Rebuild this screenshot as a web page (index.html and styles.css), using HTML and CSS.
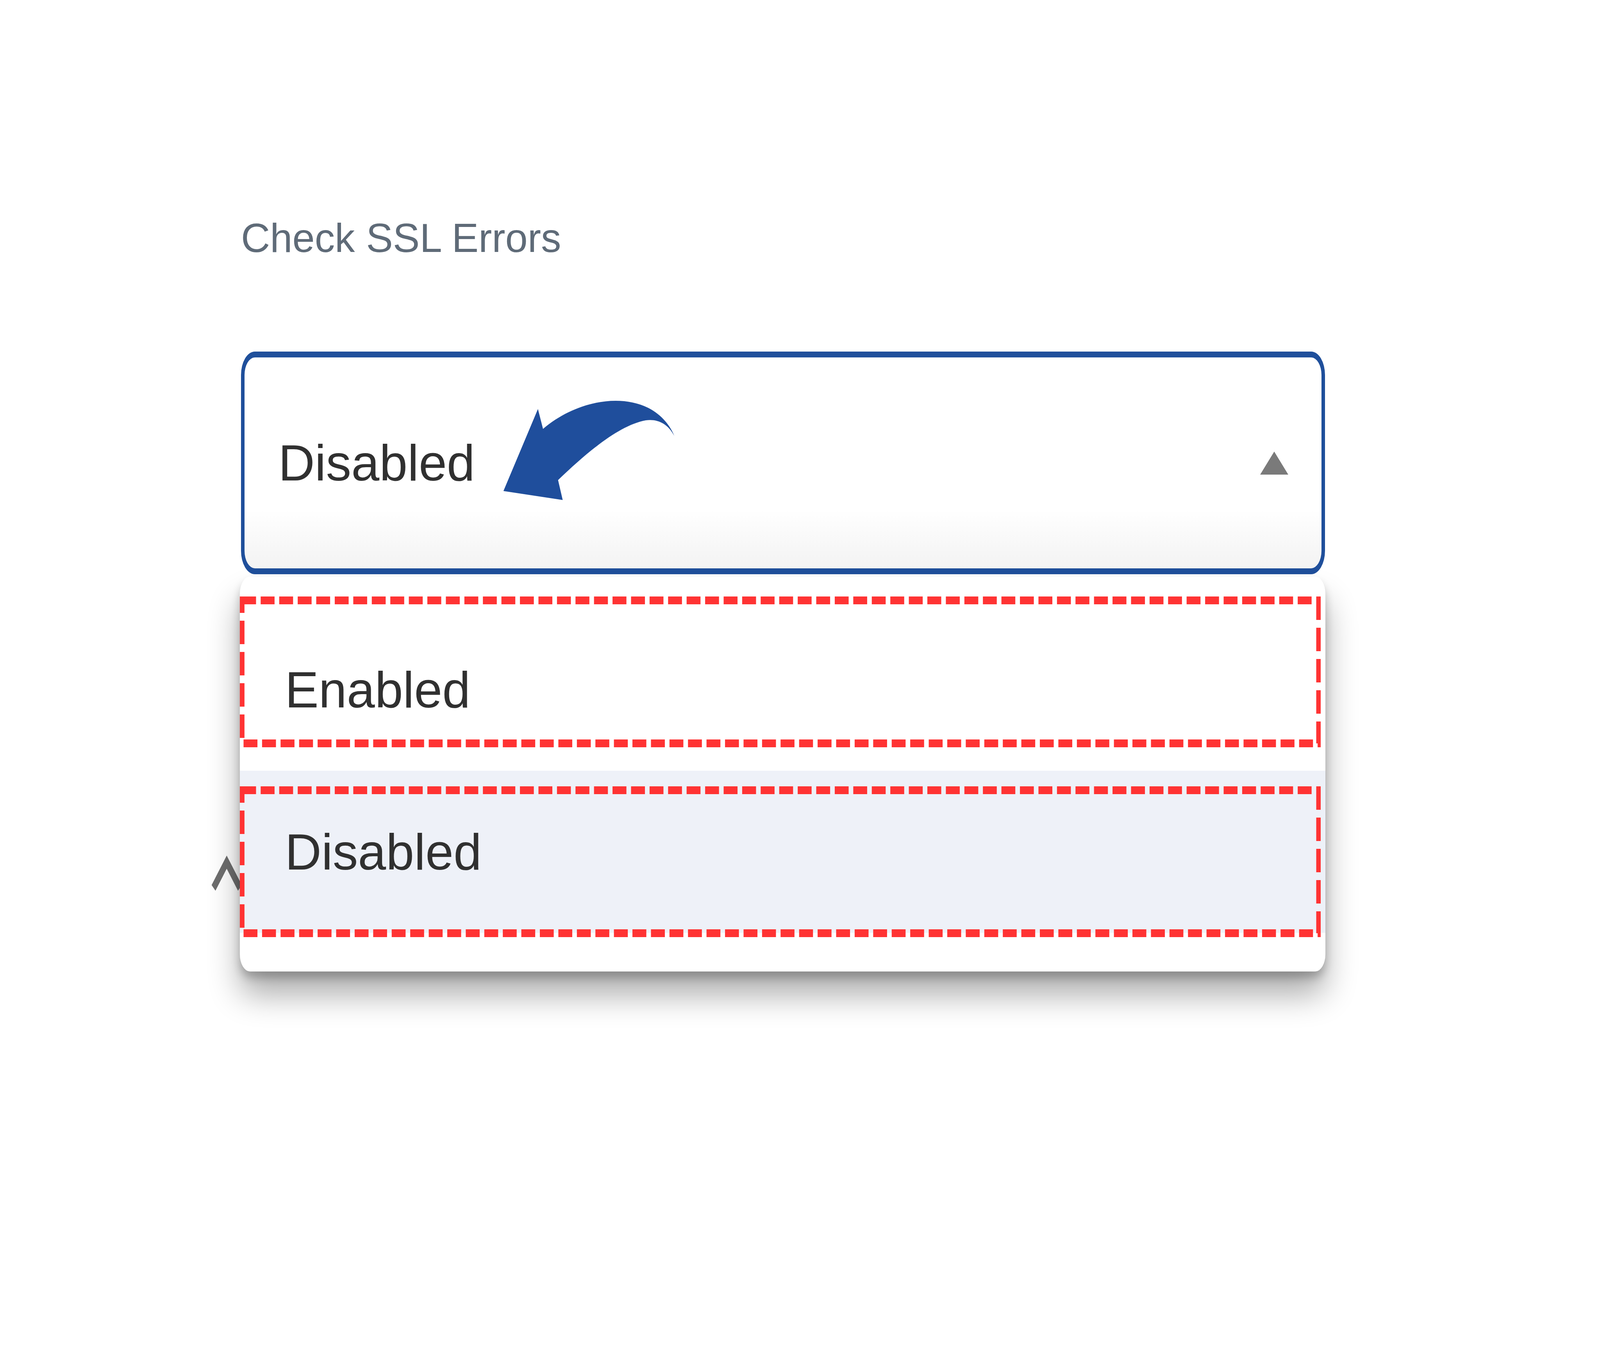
FILE: index.html
```html
<!DOCTYPE html>
<html lang="en">
<head>
  <meta charset="UTF-8">
  <meta name="viewport" content="width=device-width, initial-scale=1">
  <title>Check SSL Errors</title>
  <link rel="stylesheet" href="styles.css">
</head>
<body>

  <div class="field">
    <label class="field-label">Check SSL Errors</label>

    <div class="select-wrap">
      <div class="select-box">
        <span class="select-value">Disabled</span>
        <span class="caret"></span>

        <!-- annotation arrow -->
        <svg class="hint-arrow" viewBox="0 0 800 300" preserveAspectRatio="none">
          <path d="M25,257 L174,47 L196,98 C330,30 520,6 650,44 C710,62 748,92 763,116 C735,84 690,72 640,76 C530,88 400,150 261,229 L281,280 Z" fill="#1f4e9c"/>
        </svg>
      </div>

      <!-- collapse chevron sitting under the open menu -->
      <svg class="chevron" viewBox="0 0 160 120" preserveAspectRatio="none">
        <path d="M23,93 L80,27 L137,93" fill="none" stroke="#6e6e6e" stroke-width="22"/>
      </svg>

      <div class="menu">
        <div class="option">Enabled</div>
        <div class="option active">Disabled</div>

        <svg class="mark mark-1" viewBox="0 0 4670 386" preserveAspectRatio="none">
          <rect x="10" y="10" width="4650" height="366" fill="none" stroke="#ff3333" stroke-width="20" stroke-dasharray="60 20"/>
        </svg>
        <svg class="mark mark-2" viewBox="0 0 4670 386" preserveAspectRatio="none">
          <rect x="10" y="10" width="4650" height="366" fill="none" stroke="#ff3333" stroke-width="20" stroke-dasharray="60 20"/>
        </svg>
      </div>
    </div>
  </div>

</body>
</html>
```

FILE: styles.css
```css
  /* sizes are written in the units of the 6912 x 3456 design */
  :root {
    --x: calc(100vw / 6912);
    --y: calc(100vh / 3456);
    --f: calc(0.65 * var(--x) + 0.35 * var(--y));
  }

  body {
    margin: 0;
    background: #fff;
    font-family: 'Liberation Sans', Arial, sans-serif;
  }

  .field {
    margin-left: calc(1041 * var(--x));
    padding-top: calc(529 * var(--y));
    width: calc(4690 * var(--x));
    padding-bottom: calc(400 * var(--y));
  }

  .field-label {
    display: block;
    height: calc(161 * var(--y));
    font-size: calc(140 * var(--f));
    line-height: calc(161 * var(--y));
    color: #5f6b78;
  }

  .select-wrap {
    position: relative;
    margin-top: calc(210 * var(--y));
  }

  .select-box {
    position: relative;
    box-sizing: border-box;
    width: calc(4683 * var(--x));
    height: calc(570 * var(--y));
    border-style: solid;
    border-color: #1f4f9b;
    border-width: calc(15 * var(--y)) calc(16 * var(--x));
    border-radius: calc(60 * var(--x)) / calc(60 * var(--y));
    background: linear-gradient(#fff 72%, #f3f3f3);
    display: flex;
    align-items: center;
    justify-content: space-between;
    padding: 0 calc(143 * var(--x)) 0 calc(146 * var(--x));
  }

  .select-value {
    font-size: calc(176 * var(--f));
    color: #303030;
  }

  .caret {
    width: 0;
    height: 0;
    border-left: calc(61 * var(--x)) solid transparent;
    border-right: calc(61 * var(--x)) solid transparent;
    border-bottom: calc(59 * var(--y)) solid #7a7a7a;
  }

  .hint-arrow {
    position: absolute;
    left: calc(1093 * var(--x));
    top: calc(85 * var(--y));
    width: calc(800 * var(--x));
    height: calc(300 * var(--y));
  }

  .chevron {
    position: absolute;
    left: calc(-141 * var(--x));
    top: calc(1280 * var(--y));
    width: calc(160 * var(--x));
    height: calc(120 * var(--y));
  }

  .menu {
    position: relative;
    box-sizing: border-box;
    width: calc(4690 * var(--x));
    margin-top: calc(6 * var(--y));
    margin-left: calc(-5 * var(--x));
    padding: calc(82 * var(--y)) 0 calc(99 * var(--y));
    background: #fff;
    border-radius: calc(44 * var(--x)) / calc(44 * var(--y));
    box-shadow: 0 calc(60 * var(--y)) calc(110 * var(--f)) rgba(0, 0, 0, 0.32),
                0 calc(16 * var(--y)) calc(30 * var(--f)) rgba(0, 0, 0, 0.22);
  }

  .option {
    height: calc(415 * var(--y));
    display: flex;
    align-items: center;
    padding-left: calc(195 * var(--x));
    font-size: calc(176 * var(--f));
    color: #303030;
  }

  .option.active {
    background: #eef1f8;
  }

  .mark {
    position: absolute;
    left: 0;
    width: calc(4670 * var(--x));
    height: calc(386 * var(--y));
  }

  .mark-1 {
    top: calc(51 * var(--y));
  }

  .mark-2 {
    top: calc(537 * var(--y));
  }
```
